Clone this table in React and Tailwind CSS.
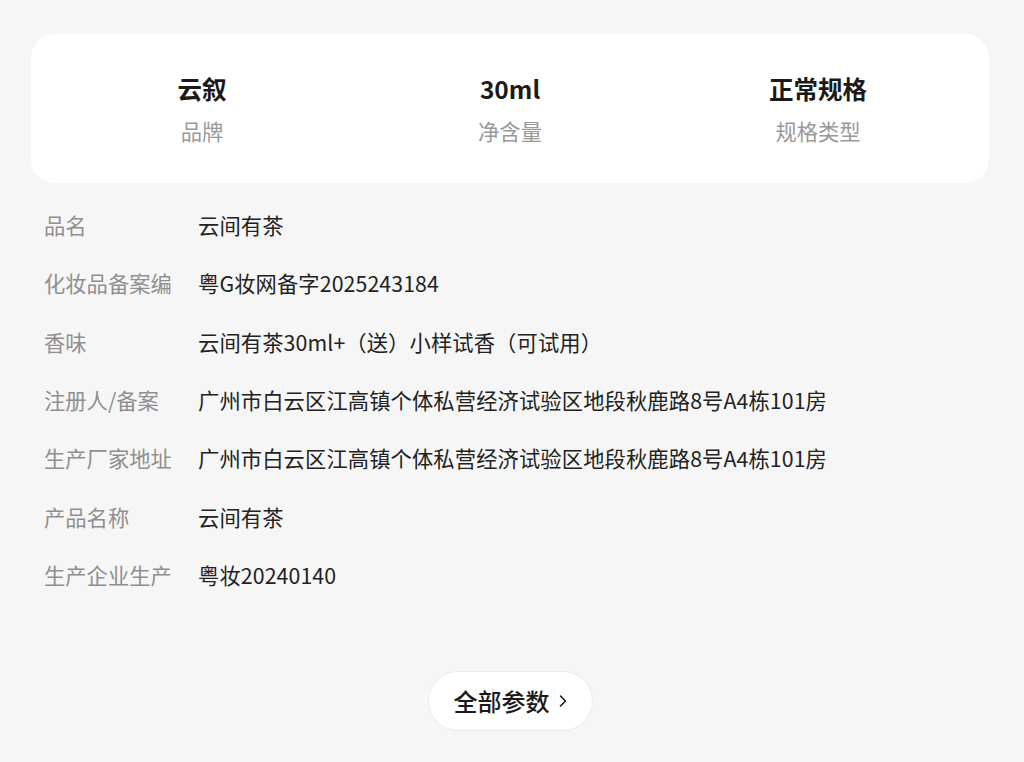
import React from "react";

const summary = [
  { value: "云叙", label: "品牌" },
  { value: "30ml", label: "净含量" },
  { value: "正常规格", label: "规格类型" },
];

const params = [
  { label: "品名", value: "云间有茶" },
  { label: "化妆品备案编", value: "粤G妆网备字2025243184" },
  { label: "香味", value: "云间有茶30ml+（送）小样试香（可试用）" },
  { label: "注册人/备案", value: "广州市白云区江高镇个体私营经济试验区地段秋鹿路8号A4栋101房" },
  { label: "生产厂家地址", value: "广州市白云区江高镇个体私营经济试验区地段秋鹿路8号A4栋101房" },
  { label: "产品名称", value: "云间有茶" },
  { label: "生产企业生产", value: "粤妆20240140" },
];

function App() {
  return (
    <div
      className="min-h-[762px] bg-[#f6f6f6] pl-[31px] pr-[35px] pt-[34px]"
      style={{ fontFamily: '"Noto Sans CJK SC", "Noto Sans", sans-serif' }}
    >
      <div className="grid grid-cols-3 rounded-[24px] bg-white px-[17px] pt-[38px] pb-[37px]">
        {summary.map((item) => (
          <div key={item.label} className="flex flex-col items-center">
            <div className="text-[24.5px] font-bold leading-[34px] text-[#1a1a1a]">{item.value}</div>
            <div className="mt-[9px] text-[21.3px] leading-[31px] text-[#999999]">{item.label}</div>
          </div>
        ))}
      </div>

      <div className="mt-[13px] px-[13px]">
        {params.map((row, i) => (
          <div key={i} className="flex h-[58.3px] items-center text-[21.3px]">
            <div className="w-[154px] shrink-0 whitespace-nowrap text-[#8f8f8f]">{row.label}</div>
            <div className="whitespace-nowrap tracking-[0.1px] text-[#222222]">{row.value}</div>
          </div>
        ))}
      </div>

      <div className="mt-[67px] flex justify-center">
        <button className="flex h-[60px] w-[165px] items-center justify-center gap-[9px] rounded-full border border-[#ececec] bg-white text-[24px] font-medium text-[#1a1a1a]">
          <span>全部参数</span>
          <svg width="8" height="14" viewBox="0 0 8 14" fill="none">
            <path d="M1.5 2 L6.5 7 L1.5 12" stroke="#1a1a1a" strokeWidth="1.6" strokeLinecap="round" strokeLinejoin="round" />
          </svg>
        </button>
      </div>
    </div>
  );
}

export default App;
